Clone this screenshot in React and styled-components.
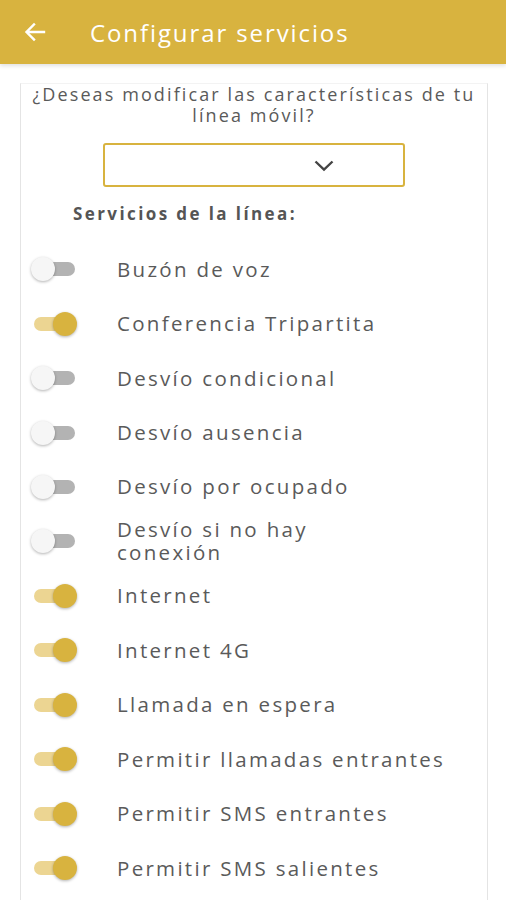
import React from "react";
import styled, { createGlobalStyle } from "styled-components";

const Global = createGlobalStyle`
  html, body { margin: 0; padding: 0; background: #fff; }
  body { font-family: "Open Sans", "Liberation Sans", sans-serif; }
`;

const Page = styled.div`
  width: 506px;
  height: 900px;
  overflow: hidden;
  background: #fff;
`;

const AppBar = styled.header`
  height: 64px;
  background: #d8b33f;
  display: flex;
  align-items: center;
  padding-left: 24px;
  gap: 44px;
  box-shadow: 0 2px 4px rgba(0, 0, 0, 0.12);
  position: relative;
`;

const Title = styled.h1`
  margin: 0;
  color: #fff;
  font-weight: 400;
  font-size: 24px;
  letter-spacing: 1.9px;
`;

const Card = styled.main`
  margin: 19px 18px 0 20px;
  border-left: 1px solid #e4e4e4;
  border-right: 1px solid #e4e4e4;
  border-top: 1px solid #f3f3f3;
  height: 900px;
  display: flex;
  flex-direction: column;
  align-items: center;
`;

const Question = styled.p`
  margin: 0;
  text-align: center;
  color: #5a5a5a;
  font-size: 18px;
  line-height: 21px;
  letter-spacing: 2.1px;
  width: 460px;
`;

const Select = styled.div`
  margin-top: 17px;
  width: 230px;
  height: 40px;
  border: 2px solid #d8b33f;
  border-radius: 3px;
  display: flex;
  align-items: center;
  justify-content: flex-end;
  padding-right: 68px;
  box-sizing: content-box;
`;

const SectionLabel = styled.h2`
  align-self: flex-start;
  margin: 15px 0 0 52px;
  font-size: 17px;
  font-weight: 700;
  color: #555;
  letter-spacing: 2.4px;
`;

const List = styled.ul`
  list-style: none;
  margin: 17px 0 0;
  padding: 0;
  align-self: stretch;
`;

const Row = styled.li`
  height: 54.45px;
  display: flex;
  align-items: center;
  padding-left: 10px;
  gap: 40px;
`;

const Switch = styled.span`
  position: relative;
  width: 46px;
  height: 24px;
  flex: none;
  display: flex;
  align-items: center;
  &::before {
    content: "";
    position: absolute;
    left: 3px;
    right: 2px;
    height: 14px;
    border-radius: 7px;
    background: ${(p) => (p.$on ? "#ecd592" : "#b3b3b3")};
  }
  &::after {
    content: "";
    position: absolute;
    ${(p) => (p.$on ? "right: 0;" : "left: 0;")}
    width: 24px;
    height: 24px;
    border-radius: 50%;
    background: ${(p) => (p.$on ? "#d8b33f" : "#f6f6f6")};
    box-shadow: 0 1px 3px rgba(0, 0, 0, 0.3);
  }
`;

const Label = styled.span`
  color: #5a5a5a;
  font-size: 20.5px;
  line-height: 23px;
  letter-spacing: 2.3px;
  white-space: pre-line;
`;

const services = [
  ["Buzón de voz", false],
  ["Conferencia Tripartita", true],
  ["Desvío condicional", false],
  ["Desvío ausencia", false],
  ["Desvío por ocupado", false],
  ["Desvío si no hay\nconexión", false],
  ["Internet", true],
  ["Internet 4G", true],
  ["Llamada en espera", true],
  ["Permitir llamadas entrantes", true],
  ["Permitir SMS entrantes", true],
  ["Permitir SMS salientes", true],
];

export default function App() {
  return (
    <Page>
      <Global />
      <AppBar>
        <svg width="22" height="20" viewBox="0 0 22 20" fill="none" stroke="#fff" strokeWidth="2.4" strokeLinecap="square">
          <path d="M20 10H3M10 2.5L2.5 10 10 17.5" />
        </svg>
        <Title>Configurar servicios</Title>
      </AppBar>
      <Card>
        <Question>¿Deseas modificar las características de tu línea móvil?</Question>
        <Select>
          <svg width="22" height="13" viewBox="0 0 22 13" fill="none" stroke="#444" strokeWidth="2.4">
            <path d="M2.5 2.5l8.5 8 8.5-8" />
          </svg>
        </Select>
        <SectionLabel>Servicios de la línea:</SectionLabel>
        <List>
          {services.map(([name, on]) => (
            <Row key={name}>
              <Switch $on={on} />
              <Label>{name}</Label>
            </Row>
          ))}
        </List>
      </Card>
    </Page>
  );
}
